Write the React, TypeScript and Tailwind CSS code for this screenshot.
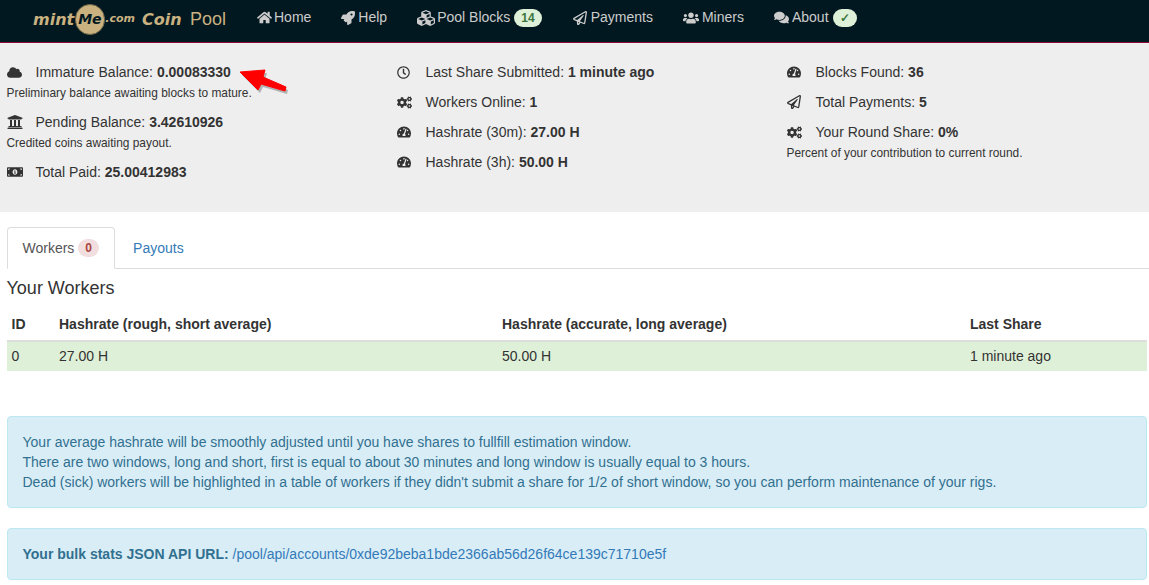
import React from "react";
import { FaHome, FaRocket, FaCubes, FaRegPaperPlane, FaUsers, FaComments, FaCloud, FaUniversity, FaMoneyBillAlt, FaRegClock, FaCogs, FaTachometerAlt } from "react-icons/fa";

function NavItem({ icon, label, badge, className }: { icon: React.ReactNode; label: string; badge?: string; className: string }) {
  return (
    <a className={`flex items-center text-[14px] text-[#cccccc] ${className}`}>
      {icon}
      <span>{label}</span>
      {badge && (
        <span className="ml-[4px] flex h-[18px] items-center rounded-[10px] bg-[#dff0d8] px-[7px] text-[12px] font-bold text-[#3c763d]">{badge}</span>
      )}
    </a>
  );
}

function Stat({ icon, label, value, note, className = "" }: { icon: React.ReactNode; label: string; value: string; note?: string; className?: string }) {
  return (
    <div className={className}>
      <div className="flex h-[20px] items-center text-[14px] leading-[20px] text-[#333333]">
        <span className="flex w-[29px] shrink-0 items-center">{icon}</span>
        <span>
          {label} <b>{value}</b>
        </span>
      </div>
      {note && <div className="mt-[2px] h-[18px] text-[11.9px] leading-[19px] text-[#333333]">{note}</div>}
    </div>
  );
}

export default function App() {
  return (
    <div className="h-[585px] w-[1149px] overflow-hidden bg-white font-['Liberation_Sans',Arial,sans-serif] text-[14px] text-[#333333]">
      <nav className="flex h-[43px] items-start border-b border-[#8b0a38] bg-[#021820]">
        <div className="ml-[33px] mt-[4px] flex h-[31px] w-[193px] items-center font-['DejaVu_Sans',sans-serif] font-bold italic text-[#c9b180]">
          <span className="w-[42px] text-[16px]">mint</span>
          <span className="flex h-[31px] w-[31px] items-center justify-center rounded-full border border-[#6f6547] bg-[#c9b180] text-[14px] text-[#021820]">Me</span>
          <span className="w-[30px] text-[11px]">.com</span>
          <span className="ml-[7px] w-[39px] text-[16px]">Coin</span>
          <span className="ml-[9px] font-['Liberation_Sans',sans-serif] text-[18px] font-normal not-italic">Pool</span>
        </div>
        <div className="flex h-[35px] items-center">
          <NavItem className="ml-[31px]" icon={<FaHome className="mr-[2px] h-[15px] w-[15px]" />} label="Home" />
          <NavItem className="ml-[30px]" icon={<FaRocket className="mr-[3px] h-[14px] w-[14px]" />} label="Help" />
          <NavItem className="ml-[30px]" icon={<FaCubes className="mr-[2px] h-[18px] w-[18px]" />} label="Pool Blocks" badge="14" />
          <NavItem className="ml-[31px]" icon={<FaRegPaperPlane className="mr-[4px] h-[14px] w-[14px]" />} label="Payments" />
          <NavItem className="ml-[30px]" icon={<FaUsers className="mr-[3px] h-[16px] w-[16px]" />} label="Miners" />
          <NavItem className="ml-[30px]" icon={<FaComments className="mr-[3px] h-[15px] w-[15px]" />} label="About" badge="✓" />
        </div>
      </nav>

      <section className="flex h-[169px] bg-[#eeeeee] pl-[6.5px] pt-[19px]">
        <div className="w-[390px]">
          <Stat icon={<FaCloud className="h-[15px] w-[15px]" />} label="Immature Balance:" value="0.00083330" note="Preliminary balance awaiting blocks to mature." />
          <Stat className="mt-[10px]" icon={<FaUniversity className="h-[16px] w-[16px]" />} label="Pending Balance:" value="3.42610926" note="Credited coins awaiting payout." />
          <Stat className="mt-[10px]" icon={<FaMoneyBillAlt className="h-[16px] w-[16px]" />} label="Total Paid:" value="25.00412983" />
        </div>
        <div className="flex w-[390px] flex-col gap-[10px]">
          <Stat icon={<FaRegClock className="h-[13px] w-[13px]" />} label="Last Share Submitted:" value="1 minute ago" />
          <Stat icon={<FaCogs className="h-[15px] w-[15px]" />} label="Workers Online:" value="1" />
          <Stat icon={<FaTachometerAlt className="h-[14px] w-[14px]" />} label="Hashrate (30m):" value="27.00 H" />
          <Stat icon={<FaTachometerAlt className="h-[14px] w-[14px]" />} label="Hashrate (3h):" value="50.00 H" />
        </div>
        <div className="flex w-[362px] flex-col gap-[10px]">
          <Stat icon={<FaTachometerAlt className="h-[14px] w-[14px]" />} label="Blocks Found:" value="36" />
          <Stat icon={<FaRegPaperPlane className="h-[14px] w-[14px]" />} label="Total Payments:" value="5" />
          <Stat icon={<FaCogs className="h-[15px] w-[15px]" />} label="Your Round Share:" value="0%" note="Percent of your contribution to current round." />
        </div>
      </section>

      <div className="pl-[6.5px] pt-[15px]">
        <div className="flex h-[42px] border-b border-[#dddddd]">
          <div className="flex h-[42px] items-center rounded-t-[4px] border border-[#dddddd] border-b-white bg-white px-[15px] text-[#555555]">
            Workers
            <span className="ml-[4px] flex h-[18px] items-center rounded-[10px] bg-[#f2dede] px-[7px] text-[12px] font-bold text-[#a94442]">0</span>
          </div>
          <div className="ml-[2px] flex h-[42px] items-center px-[16px] text-[#337ab7]">Payouts</div>
        </div>
        <h3 className="mt-[9px] text-[18px] leading-[20px] text-[#333333]">Your Workers</h3>
        <table className="mt-[10px] w-[1140.5px] border-collapse text-left text-[14px]">
          <thead>
            <tr className="h-[33px] border-b-2 border-[#dddddd]">
              <th className="w-[47.5px] px-[5px] font-bold">ID</th>
              <th className="w-[443px] px-[5px] font-bold">Hashrate (rough, short average)</th>
              <th className="w-[468px] px-[5px] font-bold">Hashrate (accurate, long average)</th>
              <th className="px-[5px] font-bold">Last Share</th>
            </tr>
          </thead>
          <tbody>
            <tr className="h-[30px] bg-[#dff0d8]">
              <td className="px-[5px]">0</td>
              <td className="px-[5px]">27.00 H</td>
              <td className="px-[5px]">50.00 H</td>
              <td className="px-[5px]">1 minute ago</td>
            </tr>
          </tbody>
        </table>

        <div className="mt-[45px] w-[1140.5px] rounded-[4px] border border-[#bce8f1] bg-[#d9edf7] px-[15px] py-[15px] leading-[20px] text-[#31708f]">
          <p>Your average hashrate will be smoothly adjusted until you have shares to fullfill estimation window.</p>
          <p>There are two windows, long and short, first is equal to about 30 minutes and long window is usually equal to 3 hours.</p>
          <p>Dead (sick) workers will be highlighted in a table of workers if they didn't submit a share for 1/2 of short window, so you can perform maintenance of your rigs.</p>
        </div>
        <div className="mt-[20px] w-[1140.5px] rounded-[4px] border border-[#bce8f1] bg-[#d9edf7] px-[15px] py-[15px] leading-[20px] text-[#31708f]">
          <b>Your bulk stats JSON API URL:</b> <a className="text-[#337ab7]">/pool/api/accounts/0xde92beba1bde2366ab56d26f64ce139c71710e5f</a>
        </div>
      </div>

      <svg className="absolute left-[236px] top-[64px]" width="60" height="40" viewBox="0 0 60 40">
        <path d="M4 8 L29 6 L27 13 L50 23 L49 27 L25 20 L22 26 Z" fill="#000" opacity="0.25" transform="translate(2 3)" />
        <path d="M4 8 L29 6 L27 13 L50 23 L49 27 L25 20 L22 26 Z" fill="#ff0000" stroke="#ff0000" strokeLinejoin="round" />
      </svg>
    </div>
  );
}
